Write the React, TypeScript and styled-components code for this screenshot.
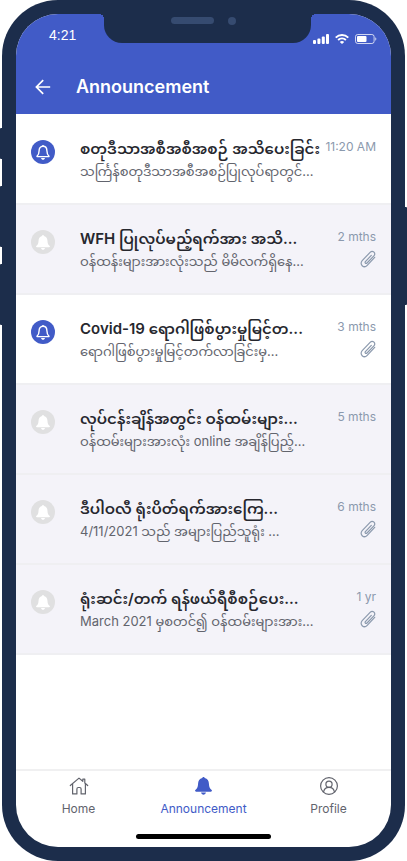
import React from "react";
import styled, { createGlobalStyle } from "styled-components";

const GlobalStyle = createGlobalStyle`
  * { box-sizing: border-box; }
  body { margin: 0; background: #fff; font-family: Inter, "Noto Sans Myanmar", "Noto Sans", sans-serif; }
  a { color: inherit; text-decoration: none; }
  svg { display: block; flex: none; }
`;

const Device = styled.div`
  position: relative;
  min-height: 100vh;
  padding: 0 2px;
  display: flex;
`;

const SideButton = styled.span<{ $side: "left" | "right"; $top: number; $length: number }>`
  position: absolute;
  ${(p) => p.$side}: 0;
  top: ${(p) => p.$top}px;
  width: 4px;
  height: ${(p) => p.$length}px;
  background: #1c2d4b;
  border-radius: 1px;
`;

const Body = styled.div`
  position: relative;
  flex: 1;
  min-width: 0;
  display: flex;
  padding: 14px;
  background: #1c2d4b;
  border-radius: 56px;
`;

const Screen = styled.div`
  flex: 1;
  min-width: 0;
  display: flex;
  flex-direction: column;
  overflow: hidden;
  background: #fff;
  border-radius: 42px;
`;

const Notch = styled.div`
  position: absolute;
  top: 14px;
  left: 102px;
  right: 94px;
  height: 29px;
  background: #1c2d4b;
  border-radius: 0 0 18px 18px;
  &::before,
  &::after {
    content: "";
    position: absolute;
    top: 0;
    width: 5px;
    height: 5px;
  }
  &::before {
    right: 100%;
    background: radial-gradient(circle at 0 100%, transparent 5px, #1c2d4b 5px);
  }
  &::after {
    left: 100%;
    background: radial-gradient(circle at 100% 100%, transparent 5px, #1c2d4b 5px);
  }
`;

const Sensors = styled.div`
  display: flex;
  align-items: center;
  gap: 14px;
  height: 13px;
  padding-left: 67px;
`;

const Speaker = styled.span`
  width: 43px;
  height: 7px;
  border-radius: 4px;
  background: #364b70;
`;

const Camera = styled.span`
  width: 8px;
  height: 8px;
  border-radius: 50%;
  background: #364b70;
`;

const Header = styled.header`
  background: #415bc7;
  color: #fff;
`;

const StatusBar = styled.div`
  display: flex;
  justify-content: space-between;
  align-items: center;
  height: 44px;
  padding: 0 14px 2px 33px;
  font: 14px/20px "Liberation Sans", sans-serif;
`;

const StatusIcons = styled.div`
  display: flex;
  align-items: center;
  gap: 6px;
  padding-top: 8px;
`;

const TitleBar = styled.div`
  display: flex;
  align-items: center;
  gap: 22px;
  height: 56px;
  padding: 2px 16px 0;
`;

const BackButton = styled.button`
  display: grid;
  place-items: center;
  width: 22px;
  height: 24px;
  padding: 0;
  border: 0;
  background: none;
  color: inherit;
  cursor: pointer;
`;

const PageTitle = styled.h1`
  margin: 0;
  font-size: 18px;
  line-height: 24px;
  font-weight: 600;
`;

const List = styled.ul`
  flex: 1;
  margin: 0;
  padding: 1px 0 0;
  list-style: none;
`;

const Row = styled.li<{ $read: boolean }>`
  height: 90px;
  border-bottom: 2px solid #efeff2;
  background: ${(p) => (p.$read ? "#f4f3f9" : "#fff")};
`;

const RowLink = styled.a`
  display: flex;
  height: 100%;
  padding: 23px 15px 0;
`;

const Badge = styled.span<{ $read: boolean }>`
  display: grid;
  place-items: center;
  flex: none;
  width: 24px;
  height: 24px;
  margin: 2px 25px 0 0;
  border-radius: 50%;
  color: #fff;
  background: ${(p) => (p.$read ? "#e0e0e1" : "#415bc7")};
`;

const Texts = styled.div`
  flex: 1;
  min-width: 0;
  white-space: nowrap;
`;

const Title = styled.div`
  height: 22px;
  font-size: 15px;
  line-height: 22px;
  font-weight: 600;
  color: #26272e;
`;

const Preview = styled.div`
  height: 22px;
  font-size: 13px;
  line-height: 22px;
  color: #62646d;
`;

const Meta = styled.div`
  display: flex;
  flex-direction: column;
  align-items: flex-end;
  flex: none;
  gap: 4px;
  font-size: 12px;
  line-height: 18px;
  color: #8b99ad;
`;

const TabBar = styled.nav`
  display: flex;
  height: 53px;
  padding-top: 6px;
  border-top: 2px solid #f0f0f1;
`;

const Tab = styled.a<{ $active?: boolean }>`
  && { color: ${(p) => (p.$active ? "#415bc7" : "#62646d")}; }
  display: flex;
  flex-direction: column;
  align-items: center;
  gap: 5px;
  flex: 1;
  font-size: 12px;
  line-height: 18px;
`;

const HomeArea = styled.div`
  display: flex;
  justify-content: center;
  height: 25px;
  padding-top: 12px;
`;

const HomeIndicator = styled.span`
  width: 135px;
  height: 5px;
  border-radius: 3px;
  background: #000;
`;

const SignalIcon = () => (
  <svg width="16" height="10" viewBox="0 0 16 10" fill="#fff">
    <rect x="0" y="6" width="3" height="4" rx="1" />
    <rect x="4.4" y="4.5" width="3" height="5.5" rx="1" />
    <rect x="8.8" y="2.5" width="3" height="7.5" rx="1" />
    <rect x="13" y="0" width="3" height="10" rx="1" />
  </svg>
);

const WifiIcon = () => (
  <svg width="14" height="10" viewBox="0 0 14 10" fill="none" stroke="#fff" strokeWidth="1.9">
    <path d="M.7 3.6C4.3.1 9.7.1 13.3 3.6" />
    <path d="M3.1 6C5.3 4 8.7 4 10.9 6" />
    <path d="M7 10 4.8 7.9a3.3 3.3 0 0 1 4.4 0Z" fill="#fff" stroke="none" />
  </svg>
);

const BatteryIcon = () => (
  <svg width="22" height="10" viewBox="0 0 22 10">
    <rect x=".5" y=".5" width="18.6" height="9" rx="2.2" fill="none" stroke="#fff" strokeOpacity=".75" />
    <rect x="2" y="2" width="9.5" height="6" rx="1" fill="#fff" />
    <path d="M20.2 3.2c1.6.6 1.6 3 0 3.6Z" fill="#fff" fillOpacity=".7" />
  </svg>
);

const BackIcon = () => (
  <svg width="16" height="16" viewBox="0 0 16 16" fill="none" stroke="currentColor" strokeWidth="1.7">
    <path d="M15.2 8H1.7M8.2 1.2 1.4 8l6.8 6.8" />
  </svg>
);

const BellOutlineIcon = () => (
  <svg width="14" height="15" viewBox="0 0 14 15" fill="none" stroke="currentColor" strokeWidth="1.4" strokeLinejoin="round">
    <path d="M7 1.2C4.2 1.2 3.1 3.4 3.1 5.7c0 3.2-.8 4.3-2.1 5.5v.4h12v-.4c-1.3-1.2-2.1-2.3-2.1-5.5 0-2.3-1.1-4.5-3.9-4.5Z" />
    <path d="M7 0v1.5" />
    <path d="M5 13h4c-.3 1-1 1.8-2 1.8S5.3 14 5 13Z" fill="currentColor" stroke="none" />
  </svg>
);

const BellIcon = ({ width = 14, height = 15 }: { width?: number; height?: number }) => (
  <svg width={width} height={height} viewBox="0 0 14 15" fill="currentColor" preserveAspectRatio="none">
    <path d="M7 0c.6 0 .9.4 1 .9 2.3.5 3.4 2.4 3.5 5 .1 2.5.7 3.7 2 4.8.9.8.4 1.5-.5 1.5H1c-.9 0-1.4-.7-.5-1.5 1.3-1.1 1.9-2.3 2-4.8.1-2.6 1.2-4.5 3.5-5 .1-.5.4-.9 1-.9Z" />
    <path d="M5 13h4c-.3 1.2-1 1.8-2 1.8S5.3 14.2 5 13Z" />
  </svg>
);

const ClipIcon = () => (
  <svg width="16" height="18" viewBox="0 0 16 18" fill="none" stroke="currentColor" strokeWidth="1.2" strokeLinecap="round">
    <path d="m11.3 5.4-5.9 6.3c-.5.6-.4 1.2 0 1.5.5.4 1.1.3 1.6-.2L13.900 5.8c1.2-1.2 1.1-2.7.1-3.7-1.1-1-2.8-.9-3.9.2L2.2 10.7c-1.5 1.6-1.4 3.7 0 5 1.4 1.3 3.6 1.1 5-.4l7.5-8" />
  </svg>
);

const HomeIcon = () => (
  <svg width="20" height="18" viewBox="0 0 20 18" fill="none" stroke="currentColor" strokeWidth="1.2" strokeLinejoin="round" strokeLinecap="round">
    <path d="M1.3 8.5 10 1.1l3.8 3.2V2.2h2V6l2.9 2.5" />
    <path d="M3.6 7v9.9h4.3V12c0-1 .5-1.5 1.4-1.5h1.4c.9 0 1.4.5 1.4 1.5v4.9h4.3V7" />
  </svg>
);

const ProfileIcon = () => (
  <svg width="18" height="18" viewBox="0 0 18 18" fill="none" stroke="currentColor" strokeWidth="1.2">
    <circle cx="9" cy="9" r="8.4" />
    <circle cx="9" cy="7.2" r="3.1" />
    <path d="M3.5 15.2c.5-3 2.5-4.9 5.5-4.9s5 1.9 5.5 4.9" />
  </svg>
);

type Announcement = { title: string; preview: string; time: string; read: boolean; attachment: boolean };

const announcements: Announcement[] = [
  { title: "စတုဒီသာအစီအစီအစဉ် အသိပေးခြင်း", preview: "သင်္ကြန်စတုဒီသာအစီအစဉ်ပြုလုပ်ရာတွင်...", time: "11:20 AM", read: false, attachment: false },
  { title: "WFH ပြုလုပ်မည့်ရက်အား အသိ...", preview: "ဝန်ထန်းများအားလုံးသည် မိမိလက်ရှိနေ...", time: "2 mths", read: true, attachment: true },
  { title: "Covid-19 ရောဂါဖြစ်ပွားမှုမြင့်တ...", preview: "ရောဂါဖြစ်ပွားမှုမြင့်တက်လာခြင်းမှ...", time: "3 mths", read: false, attachment: true },
  { title: "လုပ်ငန်းချိန်အတွင်း ဝန်ထမ်းများ...", preview: "ဝန်ထမ်းများအားလုံး online အချိန်ပြည့်...", time: "5 mths", read: true, attachment: false },
  { title: "ဒီပါဝလီ ရုံးပိတ်ရက်အားကြေ...", preview: "4/11/2021 သည် အများပြည်သူရုံး ...", time: "6 mths", read: true, attachment: true },
  { title: "ရုံးဆင်း/တက် ရန်ဖယ်ရီစီစဉ်ပေး...", preview: "March 2021 မှစတင်၍ ဝန်ထမ်းများအား...", time: "1 yr", read: true, attachment: true },
];

export default function App() {
  return (
    <>
      <GlobalStyle />
      <Device>
        <SideButton $side="left" $top={128} $length={31} />
        <SideButton $side="left" $top={186} $length={61} />
        <SideButton $side="left" $top={264} $length={61} />
        <SideButton $side="right" $top={207} $length={98} />
        <Body>
          <Screen>
            <Header>
              <StatusBar>
                <time>4:21</time>
                <StatusIcons>
                  <SignalIcon />
                  <WifiIcon />
                  <BatteryIcon />
                </StatusIcons>
              </StatusBar>
              <TitleBar>
                <BackButton aria-label="Back"><BackIcon /></BackButton>
                <PageTitle>Announcement</PageTitle>
              </TitleBar>
            </Header>
            <List>
              {announcements.map((a) => (
                <Row key={a.title} $read={a.read}>
                  <RowLink href="#">
                    <Badge $read={a.read}>{a.read ? <BellIcon /> : <BellOutlineIcon />}</Badge>
                    <Texts lang="my">
                      <Title>{a.title}</Title>
                      <Preview>{a.preview}</Preview>
                    </Texts>
                    <Meta>
                      <time>{a.time}</time>
                      {a.attachment && <ClipIcon />}
                    </Meta>
                  </RowLink>
                </Row>
              ))}
            </List>
            <TabBar>
              <Tab href="#home"><HomeIcon />Home</Tab>
              <Tab href="#announcement" $active aria-current="page"><BellIcon width={17} height={18} />Announcement</Tab>
              <Tab href="#profile"><ProfileIcon />Profile</Tab>
            </TabBar>
            <HomeArea><HomeIndicator /></HomeArea>
          </Screen>
          <Notch>
            <Sensors>
              <Speaker />
              <Camera />
            </Sensors>
          </Notch>
        </Body>
      </Device>
    </>
  );
}
